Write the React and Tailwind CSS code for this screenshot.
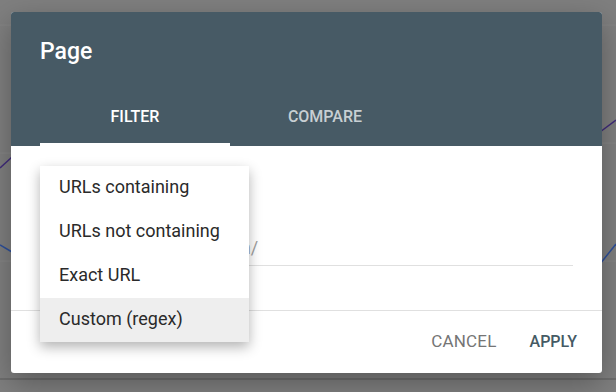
const options = ['URLs containing', 'URLs not containing', 'Exact URL', 'Custom (regex)']

function Backdrop() {
    return (
        <svg className="absolute inset-0" width="616" height="392" viewBox="0 0 616 392">
            <line x1="0" y1="25" x2="616" y2="25" stroke="#878787" strokeWidth="1" />
            <line x1="0" y1="153" x2="12" y2="153" stroke="#878787" strokeWidth="1" />
            <line x1="600" y1="143" x2="616" y2="143" stroke="#878787" strokeWidth="1" />
            <line x1="0" y1="261" x2="616" y2="261" stroke="#878787" strokeWidth="1" />
            <line x1="0" y1="379" x2="616" y2="379" stroke="#5c5c5c" strokeWidth="1" />
            <line x1="0" y1="168" x2="12" y2="157" stroke="#3f2a7a" strokeWidth="1.5" />
            <line x1="600" y1="132" x2="616" y2="120" stroke="#3f2a7a" strokeWidth="1.5" />
            <line x1="0" y1="245" x2="12" y2="252" stroke="#2d4f9a" strokeWidth="1.5" />
            <line x1="600" y1="264" x2="616" y2="244" stroke="#2d4f9a" strokeWidth="1.5" />
        </svg>
    )
}

export default function App() {
    return (
        <div className="relative h-[392px] w-[616px] overflow-hidden bg-[#7f7f7f] pl-[11px] pt-[12px] font-['Roboto',sans-serif]">
            <Backdrop />
            <div className="relative flex h-[361px] w-[591px] flex-col rounded-[3px] bg-white shadow-[0_10px_30px_rgba(0,0,0,0.3)]">
                {/* header */}
                <div className="flex h-[134px] flex-col rounded-t-[3px] bg-[#475a65]">
                    <h1 className="pl-[29px] pt-[26px] text-[23px] font-medium leading-[28px] text-white">Page</h1>
                    <div className="mt-auto flex pl-[29px]">
                        <div className="flex h-[48px] w-[190px] flex-col items-center justify-between">
                            <span className="pt-[9px] text-[16px] font-medium leading-[20px] text-white">FILTER</span>
                            <span className="h-[3px] w-full bg-white" />
                        </div>
                        <div className="flex h-[48px] w-[190px] flex-col items-center">
                            <span className="pt-[9px] text-[16px] font-medium leading-[20px] text-[#c8cfd3]">COMPARE</span>
                        </div>
                    </div>
                </div>

                {/* body */}
                <div className="h-[164px] px-[29px] pt-[89px]">
                    <div className="border-b border-[#e0e0e0] pb-[4px] text-[18px] leading-[26px] text-[#9e9e9e]">
                        https://www.example.com/
                    </div>
                </div>

                {/* footer */}
                <div className="flex flex-1 items-center justify-end gap-[33px] border-t border-[#e0e0e0] pr-[25px]">
                    <button className="text-[17px] tracking-[0.2px] text-[#757575]">CANCEL</button>
                    <button className="text-[16px] font-medium text-[#455a64]">APPLY</button>
                </div>

                {/* dropdown */}
                <div className="absolute left-[29px] top-[154px] w-[209px] bg-white shadow-[0_5px_12px_rgba(0,0,0,0.3)]">
                    {options.map((o, i) => (
                        <div
                            key={o}
                            className={`flex h-[44px] items-center pb-[3px] pl-[19px] text-[18px] text-[#2a2a2a] ${i === 3 ? 'bg-[#eeeeee]' : ''}`}
                        >
                            {o}
                        </div>
                    ))}
                </div>
            </div>
        </div>
    )
}
